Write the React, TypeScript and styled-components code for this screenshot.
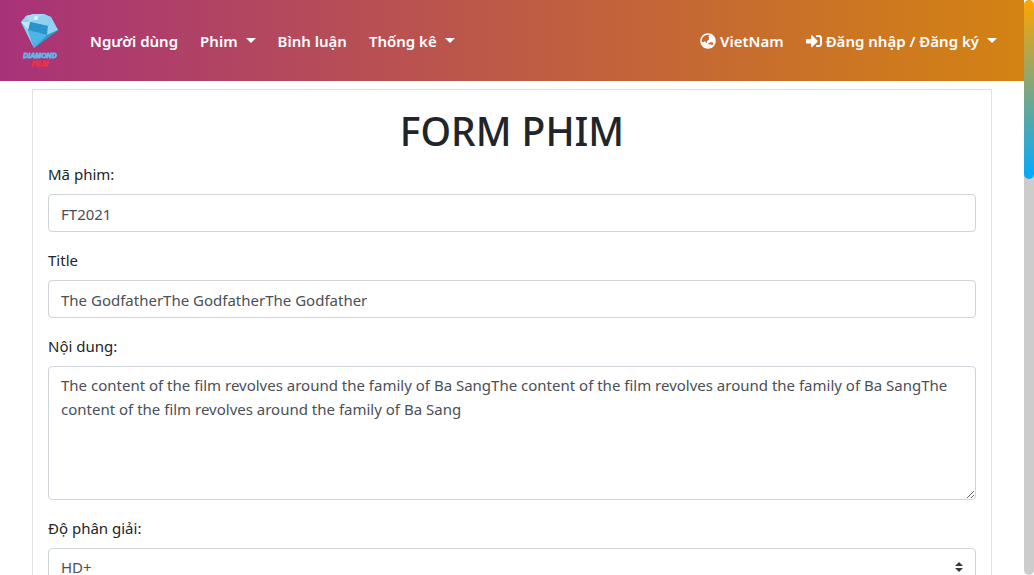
import React from "react";
import styled, { createGlobalStyle } from "styled-components";
import { FaGlobeAsia, FaSignInAlt } from "react-icons/fa";

const GlobalStyle = createGlobalStyle`
  *, *::before, *::after { box-sizing: border-box; }
  body {
    margin: 0;
    font-family: "Noto Sans", "Open Sans", sans-serif;
    font-size: 15px;
    line-height: 24px;
    color: #212529;
    background: #fff;
  }
`;

const Shell = styled.div`
  display: flex;
  height: 100vh;
  overflow: hidden;
`;

const Page = styled.div`
  flex: 1;
  min-width: 0;
  overflow-y: auto;
  scrollbar-width: none;
`;

const ScrollTrack = styled.div`
  flex: none;
  width: 10px;
  border-radius: 5px;
  background: #ccc;
`;

const ScrollThumb = styled.div`
  height: 31.2%;
  border-radius: 5px;
  background: linear-gradient(orange, #00aaff);
`;

const Navbar = styled.nav`
  display: flex;
  align-items: center;
  gap: 30px;
  padding: 12px 27px 12px 20px;
  background: linear-gradient(to right, #a83279, #d38312);
`;

const Brand = styled.a`
  display: flex;

  svg {
    display: block;
  }
`;

const NavList = styled.ul<{ $end?: boolean }>`
  display: flex;
  align-items: center;
  gap: 22px;
  margin: 0;
  margin-left: ${(p) => (p.$end ? "auto" : "0")};
  padding: 0;
  list-style: none;
`;

const NavLink = styled.a<{ $caret?: boolean }>`
  display: flex;
  align-items: center;
  gap: 4px;
  color: #fff;
  font-weight: 600;
  text-decoration: none;
  white-space: nowrap;

  &::after {
    content: "";
    display: ${(p) => (p.$caret ? "block" : "none")};
    margin-left: 4px;
    border: 5px solid transparent;
    border-top-color: #fff;
    border-bottom: 0;
  }
`;

const Card = styled.form`
  margin: 8px 32px;
  padding: 16px 15px;
  border: 1px solid #dee2e6;
`;

const Title = styled.h1`
  margin: 0 0 6px;
  font-size: 39px;
  font-weight: 500;
  line-height: 50px;
  text-align: center;
`;

const Group = styled.div`
  margin-bottom: 16px;
`;

const Label = styled.label`
  display: block;
  margin-bottom: 8px;
`;

const Input = styled.input`
  display: block;
  width: 100%;
  height: 38px;
  padding: 7px 12px 5px;
  border: 1px solid #ced4da;
  border-radius: 4px;
  background: #fff;
  color: #495057;
  font: inherit;
`;

const TextArea = styled.textarea`
  display: block;
  width: 100%;
  padding: 6px 12px;
  border: 1px solid #ced4da;
  border-radius: 4px;
  background: #fff;
  color: #495057;
  font: inherit;
  resize: vertical;
`;

const SelectBox = styled.div`
  position: relative;

  svg {
    position: absolute;
    top: 14px;
    right: 13px;
    pointer-events: none;
  }
`;

const Select = styled.select`
  appearance: none;
  display: block;
  width: 100%;
  height: 38px;
  padding: 6px 28px 6px 12px;
  border: 1px solid #ced4da;
  border-radius: 4px;
  background: #fff;
  color: #495057;
  font: inherit;
`;

const LogoText = styled.text`
  font-family: "Liberation Sans", sans-serif;
  font-size: 7px;
  font-weight: 700;
  font-style: italic;
  text-anchor: middle;
`;

function Logo() {
  return (
    <svg width="40" height="57" viewBox="0 0 40 57" role="img" aria-label="Diamond Film">
      <path d="M1 10 6 4 14 2 24 2 31 5 38 18 14 36Z" fill="#49a9dc" />
      <path d="M1 10 6 4 14 2 24 2 31 5 28 14 10 10 8 18Z" fill="#8fd0f3" />
      <path d="M6 4 14 2 24 2 20 5 10 10Z" fill="#a4daf6" />
      <path d="M10 10 28 14 27 23 8 18Z" fill="#2b93cd" />
      <path d="M31 5 38 18 27 23 28 14Z" fill="#93d2f2" />
      <path d="M1 10 10 10 8 18Z" fill="#c2e8fa" />
      <path d="M1 10 8 18 14 36Z" fill="#8dcdf0" />
      <path d="M8 18 27 23 14 36Z" fill="#4db4e5" />
      <path d="M27 23 38 18 14 36Z" fill="#2e98d2" />
      <circle cx="16" cy="6" r="2" fill="#e5f7ff" />
      <LogoText x="20" y="46" fill="#62b5ea" stroke="#62b5ea" strokeWidth="0.8">DIAMOND</LogoText>
      <LogoText x="20" y="54" fill="#ed3046" stroke="#ed3046" strokeWidth="0.8">FILM</LogoText>
    </svg>
  );
}

export default function App() {
  return (
    <>
      <GlobalStyle />
      <Shell>
        <Page>
          <Navbar>
            <Brand href="#"><Logo /></Brand>
            <NavList>
              <li><NavLink href="#">Người dùng</NavLink></li>
              <li><NavLink href="#" $caret>Phim</NavLink></li>
              <li><NavLink href="#">Bình luận</NavLink></li>
              <li><NavLink href="#" $caret>Thống kê</NavLink></li>
            </NavList>
            <NavList $end>
              <li><NavLink href="#"><FaGlobeAsia size={16} />VietNam</NavLink></li>
              <li><NavLink href="#" $caret><FaSignInAlt size={16} />Đăng nhập / Đăng ký</NavLink></li>
            </NavList>
          </Navbar>
          <Card>
            <Title>FORM PHIM</Title>
            <Group>
              <Label htmlFor="code">Mã phim:</Label>
              <Input id="code" type="text" defaultValue="FT2021" />
            </Group>
            <Group>
              <Label htmlFor="title">Title</Label>
              <Input id="title" type="text" defaultValue="The GodfatherThe GodfatherThe Godfather" />
            </Group>
            <Group>
              <Label htmlFor="content">Nội dung:</Label>
              <TextArea
                id="content"
                rows={5}
                defaultValue="The content of the film revolves around the family of Ba SangThe content of the film revolves around the family of Ba SangThe content of the film revolves around the family of Ba Sang"
              />
            </Group>
            <Group>
              <Label htmlFor="resolution">Độ phân giải:</Label>
              <SelectBox>
                <Select id="resolution" defaultValue="HD+">
                  <option>HD+</option>
                </Select>
                <svg width="8" height="10" viewBox="0 0 4 5" aria-hidden="true">
                  <path fill="#343a40" d="M2 0 0 2h4zm0 5L0 3h4z" />
                </svg>
              </SelectBox>
            </Group>
          </Card>
        </Page>
        <ScrollTrack aria-hidden="true"><ScrollThumb /></ScrollTrack>
      </Shell>
    </>
  );
}
